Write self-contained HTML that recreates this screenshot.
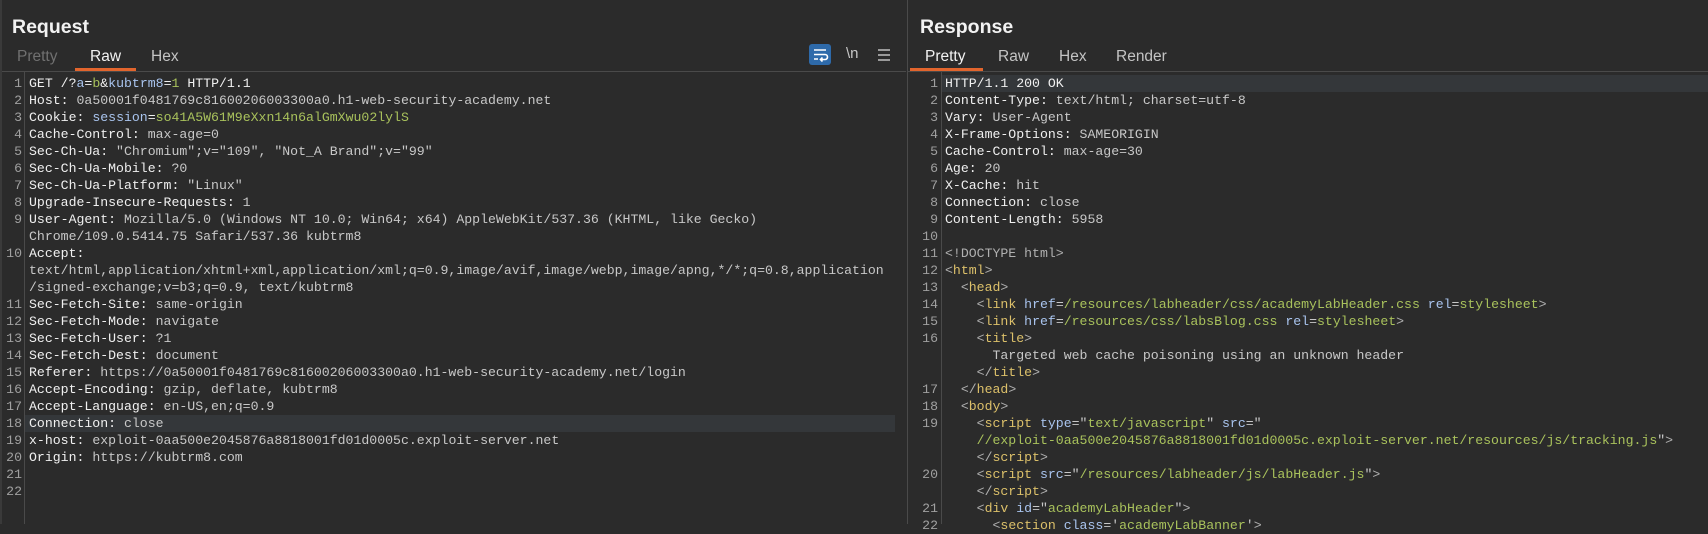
<!DOCTYPE html>
<html><head><meta charset="utf-8"><style>
*{margin:0;padding:0;box-sizing:border-box}
body{width:1708px;height:524px;background:#2b2b2b;overflow:hidden;position:relative;font-family:"Liberation Sans",sans-serif;color:#ddd}
.title{position:absolute;top:16px;font-size:19.5px;font-weight:bold;color:#f2f2f2}
.tab{position:absolute;top:48px;font-size:15.5px;color:#c4c4c4}
.ul{position:absolute;top:68px;height:3px;background:#e2652d}
.hr{position:absolute;top:71px;height:1px;background:#4a4a4a}
.code{position:absolute;top:75px;font-family:"Liberation Mono",monospace;font-size:13.2px;line-height:17px;white-space:normal;color:#c8c8c8}
.code span{white-space:pre}
.code div{height:17px;position:relative}
.n{position:absolute;text-align:right;color:#a0a0a0}
.h{color:#f0f0f0}.g{color:#a9c25c}.b{color:#a9c4ee}.t{color:#dcc06a}.p{color:#b0b0b0}
.hl{background:#34373a}
</style></head><body>
<div style="position:absolute;left:0;top:0;width:2px;height:524px;background:#3a3a3a"></div>
<div class="title" style="left:12px">Request</div>
<div class="tab" style="left:17px;color:#707070">Pretty</div>
<div class="tab" style="left:90px;color:#f2f2f2">Raw</div>
<div class="tab" style="left:151px">Hex</div>
<div class="ul" style="left:75px;width:61px"></div>
<div class="hr" style="left:2px;width:904px"></div>
<div style="position:absolute;left:809px;top:44px;width:22px;height:21px;background:#2e6aaa;border-radius:3px"></div>
<svg style="position:absolute;left:809px;top:44px" width="22" height="21"><g stroke="#fff" stroke-width="1.6" fill="none"><path d="M5 6h12M5 10.5h11a2.5 2.5 0 0 1 0 5h-4M5 15h4"/><path d="M13.5 13.5l-2 2 2 2"/></g></svg>
<div style="position:absolute;left:846px;top:45px;font-size:15px;color:#c8c8c8">\n</div>
<svg style="position:absolute;left:878px;top:48px" width="13" height="14"><g stroke="#c0c0c0" stroke-width="1.6"><path d="M0 2h12M0 7h12M0 12h12"/></g></svg>
<div style="position:absolute;left:907px;top:0;width:1px;height:524px;background:#4a4a4a"></div>
<div style="position:absolute;left:24px;top:72px;width:1px;height:452px;background:#4a4a4a"></div>
<div style="position:absolute;left:941px;top:72px;width:1px;height:452px;background:#4a4a4a"></div>

<div class="code" style="left:0;width:906px">
<div><span class="n" style="left:0;width:22px">1</span><span style="position:absolute;left:29px"><span class="h">GET /?</span><span class="b">a</span><span class="h">=</span><span class="g">b</span><span class="h">&amp;</span><span class="b">kubtrm8</span><span class="h">=</span><span class="g">1</span><span class="h"> HTTP/1.1</span></span></div>
<div><span class="n" style="width:22px">2</span><span style="position:absolute;left:29px"><span class="h">Host:</span> 0a50001f0481769c81600206003300a0.h1-web-security-academy.net</span></div>
<div><span class="n" style="width:22px">3</span><span style="position:absolute;left:29px"><span class="h">Cookie:</span> <span class="b">session</span><span class="h">=</span><span class="g">so41A5W61M9eXxn14n6alGmXwu02lylS</span></span></div>
<div><span class="n" style="width:22px">4</span><span style="position:absolute;left:29px"><span class="h">Cache-Control:</span> max-age=0</span></div>
<div><span class="n" style="width:22px">5</span><span style="position:absolute;left:29px"><span class="h">Sec-Ch-Ua:</span> "Chromium";v="109", "Not_A Brand";v="99"</span></div>
<div><span class="n" style="width:22px">6</span><span style="position:absolute;left:29px"><span class="h">Sec-Ch-Ua-Mobile:</span> ?0</span></div>
<div><span class="n" style="width:22px">7</span><span style="position:absolute;left:29px"><span class="h">Sec-Ch-Ua-Platform:</span> "Linux"</span></div>
<div><span class="n" style="width:22px">8</span><span style="position:absolute;left:29px"><span class="h">Upgrade-Insecure-Requests:</span> 1</span></div>
<div><span class="n" style="width:22px">9</span><span style="position:absolute;left:29px"><span class="h">User-Agent:</span> Mozilla/5.0 (Windows NT 10.0; Win64; x64) AppleWebKit/537.36 (KHTML, like Gecko)</span></div>
<div><span style="position:absolute;left:29px">Chrome/109.0.5414.75 Safari/537.36 kubtrm8</span></div>
<div><span class="n" style="width:22px">10</span><span style="position:absolute;left:29px"><span class="h">Accept:</span></span></div>
<div><span style="position:absolute;left:29px">text/html,application/xhtml+xml,application/xml;q=0.9,image/avif,image/webp,image/apng,*/*;q=0.8,application</span></div>
<div><span style="position:absolute;left:29px">/signed-exchange;v=b3;q=0.9, text/kubtrm8</span></div>
<div><span class="n" style="width:22px">11</span><span style="position:absolute;left:29px"><span class="h">Sec-Fetch-Site:</span> same-origin</span></div>
<div><span class="n" style="width:22px">12</span><span style="position:absolute;left:29px"><span class="h">Sec-Fetch-Mode:</span> navigate</span></div>
<div><span class="n" style="width:22px">13</span><span style="position:absolute;left:29px"><span class="h">Sec-Fetch-User:</span> ?1</span></div>
<div><span class="n" style="width:22px">14</span><span style="position:absolute;left:29px"><span class="h">Sec-Fetch-Dest:</span> document</span></div>
<div><span class="n" style="width:22px">15</span><span style="position:absolute;left:29px"><span class="h">Referer:</span> https://0a50001f0481769c81600206003300a0.h1-web-security-academy.net/login</span></div>
<div><span class="n" style="width:22px">16</span><span style="position:absolute;left:29px"><span class="h">Accept-Encoding:</span> gzip, deflate, kubtrm8</span></div>
<div><span class="n" style="width:22px">17</span><span style="position:absolute;left:29px"><span class="h">Accept-Language:</span> en-US,en;q=0.9</span></div>
<div class="hl" style="margin-left:25px;width:870px"><span class="n" style="left:-25px;width:22px">18</span><span style="position:absolute;left:4px"><span class="h">Connection:</span> close</span></div>
<div><span class="n" style="width:22px">19</span><span style="position:absolute;left:29px"><span class="h">x-host:</span> exploit-0aa500e2045876a8818001fd01d0005c.exploit-server.net</span></div>
<div><span class="n" style="width:22px">20</span><span style="position:absolute;left:29px"><span class="h">Origin:</span> https://kubtrm8.com</span></div>
<div><span class="n" style="width:22px">21</span></div>
<div><span class="n" style="width:22px">22</span></div>
</div>

<div class="title" style="left:920px">Response</div>
<div class="tab" style="left:925px;color:#f2f2f2">Pretty</div>
<div class="tab" style="left:998px">Raw</div>
<div class="tab" style="left:1059px">Hex</div>
<div class="tab" style="left:1116px">Render</div>
<div class="ul" style="left:910px;width:73px"></div>
<div class="hr" style="left:908px;width:800px"></div>

<div class="code" style="left:908px;width:800px">
<div class="hl" style="margin-left:34px"><span class="n" style="left:-34px;width:30px">1</span><span style="position:absolute;left:3px"><span class="h">HTTP/1.1 200 OK</span></span></div>
<div><span class="n" style="width:30px">2</span><span style="position:absolute;left:37px"><span class="h">Content-Type:</span> text/html; charset=utf-8</span></div>
<div><span class="n" style="width:30px">3</span><span style="position:absolute;left:37px"><span class="h">Vary:</span> User-Agent</span></div>
<div><span class="n" style="width:30px">4</span><span style="position:absolute;left:37px"><span class="h">X-Frame-Options:</span> SAMEORIGIN</span></div>
<div><span class="n" style="width:30px">5</span><span style="position:absolute;left:37px"><span class="h">Cache-Control:</span> max-age=30</span></div>
<div><span class="n" style="width:30px">6</span><span style="position:absolute;left:37px"><span class="h">Age:</span> 20</span></div>
<div><span class="n" style="width:30px">7</span><span style="position:absolute;left:37px"><span class="h">X-Cache:</span> hit</span></div>
<div><span class="n" style="width:30px">8</span><span style="position:absolute;left:37px"><span class="h">Connection:</span> close</span></div>
<div><span class="n" style="width:30px">9</span><span style="position:absolute;left:37px"><span class="h">Content-Length:</span> 5958</span></div>
<div><span class="n" style="width:30px">10</span></div>
<div><span class="n" style="width:30px">11</span><span style="position:absolute;left:37px" class="p">&lt;!DOCTYPE html&gt;</span></div>
<div><span class="n" style="width:30px">12</span><span style="position:absolute;left:37px"><span class="p">&lt;</span><span class="t">html</span><span class="p">&gt;</span></span></div>
<div><span class="n" style="width:30px">13</span><span style="position:absolute;left:37px">  <span class="p">&lt;</span><span class="t">head</span><span class="p">&gt;</span></span></div>
<div><span class="n" style="width:30px">14</span><span style="position:absolute;left:37px">    <span class="p">&lt;</span><span class="t">link</span> <span class="b">href</span>=<span class="g">/resources/labheader/css/academyLabHeader.css</span> <span class="b">rel</span>=<span class="g">stylesheet</span><span class="p">&gt;</span></span></div>
<div><span class="n" style="width:30px">15</span><span style="position:absolute;left:37px">    <span class="p">&lt;</span><span class="t">link</span> <span class="b">href</span>=<span class="g">/resources/css/labsBlog.css</span> <span class="b">rel</span>=<span class="g">stylesheet</span><span class="p">&gt;</span></span></div>
<div><span class="n" style="width:30px">16</span><span style="position:absolute;left:37px">    <span class="p">&lt;</span><span class="t">title</span><span class="p">&gt;</span></span></div>
<div><span style="position:absolute;left:37px">      Targeted web cache poisoning using an unknown header</span></div>
<div><span style="position:absolute;left:37px">    <span class="p">&lt;/</span><span class="t">title</span><span class="p">&gt;</span></span></div>
<div><span class="n" style="width:30px">17</span><span style="position:absolute;left:37px">  <span class="p">&lt;/</span><span class="t">head</span><span class="p">&gt;</span></span></div>
<div><span class="n" style="width:30px">18</span><span style="position:absolute;left:37px">  <span class="p">&lt;</span><span class="t">body</span><span class="p">&gt;</span></span></div>
<div><span class="n" style="width:30px">19</span><span style="position:absolute;left:37px">    <span class="p">&lt;</span><span class="t">script</span> <span class="b">type</span>="<span class="g">text/javascript</span>" <span class="b">src</span>="</span></div>
<div><span style="position:absolute;left:37px">    <span class="g">//exploit-0aa500e2045876a8818001fd01d0005c.exploit-server.net/resources/js/tracking.js</span>"<span class="p">&gt;</span></span></div>
<div><span style="position:absolute;left:37px">    <span class="p">&lt;/</span><span class="t">script</span><span class="p">&gt;</span></span></div>
<div><span class="n" style="width:30px">20</span><span style="position:absolute;left:37px">    <span class="p">&lt;</span><span class="t">script</span> <span class="b">src</span>="<span class="g">/resources/labheader/js/labHeader.js</span>"<span class="p">&gt;</span></span></div>
<div><span style="position:absolute;left:37px">    <span class="p">&lt;/</span><span class="t">script</span><span class="p">&gt;</span></span></div>
<div><span class="n" style="width:30px">21</span><span style="position:absolute;left:37px">    <span class="p">&lt;</span><span class="t">div</span> <span class="b">id</span>="<span class="g">academyLabHeader</span>"<span class="p">&gt;</span></span></div>
<div><span class="n" style="width:30px">22</span><span style="position:absolute;left:37px">      <span class="p">&lt;</span><span class="t">section</span> <span class="b">class</span>='<span class="g">academyLabBanner</span>'<span class="p">&gt;</span></span></div>
</div>
</body></html>
